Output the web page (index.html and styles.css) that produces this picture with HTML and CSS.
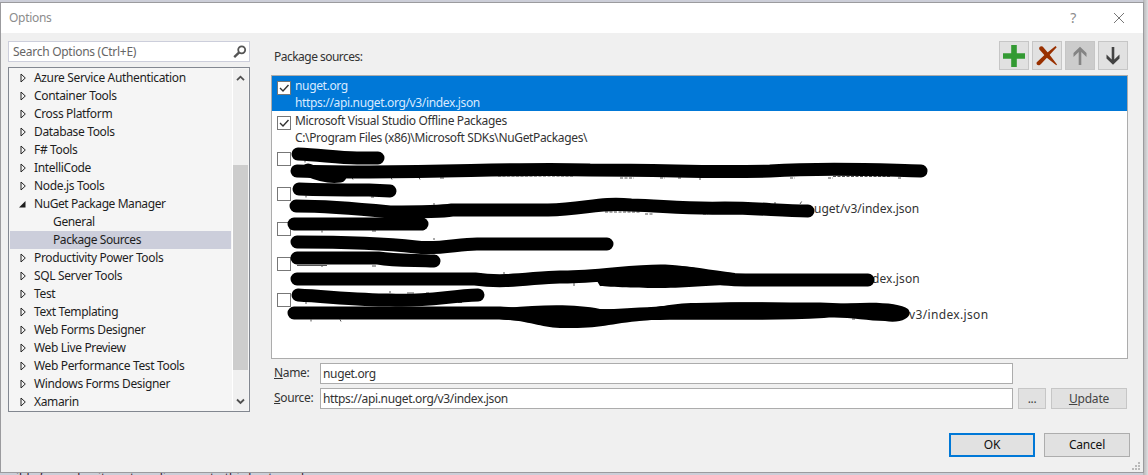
FILE: index.html
```html
<!DOCTYPE html>
<html lang="en">
<head>
<meta charset="utf-8">
<title>Options</title>
<link rel="stylesheet" href="styles.css">
</head>
<body>
<svg width="0" height="0" class="defs">
  <defs>
    <symbol id="closed" viewBox="0 0 7 10"><path d="M1 1v8l4.300-4z" fill="none" stroke="#222"/></symbol>
    <symbol id="opened" viewBox="0 0 7 7"><path d="M6.500 0v6.500H0z" fill="#1e1e1e"/></symbol>
  </defs>
</svg>
<div class="behind">ible for and write out media move to this best way loop</div>
<div class="dialog">
  <header class="titlebar">
    <span class="title">Options</span>
    <span class="help">?</span>
    <svg class="close" width="12" height="12" viewBox="0 0 12 12"><path d="M1 1l10 10M11 1L1 11" stroke="#777" fill="none"/></svg>
  </header>
  <main class="content">
    <aside class="nav">
      <div class="search"><span>Search Options (Ctrl+E)</span>
        <svg width="14" height="14" viewBox="0 0 14 14"><circle cx="8.700" cy="4.800" r="3.500" fill="none" stroke="#555" stroke-width="1.800"/><path d="M6.200 7.300L1.200 12.200" stroke="#555" stroke-width="2.400"/></svg>
      </div>
      <div class="tree">
        <ul class="items">
          <li><svg><use href="#closed"/></svg><span>Azure Service Authentication</span></li>
          <li><svg><use href="#closed"/></svg><span>Container Tools</span></li>
          <li><svg><use href="#closed"/></svg><span>Cross Platform</span></li>
          <li><svg><use href="#closed"/></svg><span>Database Tools</span></li>
          <li><svg><use href="#closed"/></svg><span>F# Tools</span></li>
          <li><svg><use href="#closed"/></svg><span>IntelliCode</span></li>
          <li><svg><use href="#closed"/></svg><span>Node.js Tools</span></li>
          <li class="open"><svg><use href="#opened"/></svg><span>NuGet Package Manager</span></li>
          <li class="child"><span>General</span></li>
          <li class="child selected"><span>Package Sources</span></li>
          <li><svg><use href="#closed"/></svg><span>Productivity Power Tools</span></li>
          <li><svg><use href="#closed"/></svg><span>SQL Server Tools</span></li>
          <li><svg><use href="#closed"/></svg><span>Test</span></li>
          <li><svg><use href="#closed"/></svg><span>Text Templating</span></li>
          <li><svg><use href="#closed"/></svg><span>Web Forms Designer</span></li>
          <li><svg><use href="#closed"/></svg><span>Web Live Preview</span></li>
          <li><svg><use href="#closed"/></svg><span>Web Performance Test Tools</span></li>
          <li><svg><use href="#closed"/></svg><span>Windows Forms Designer</span></li>
          <li><svg><use href="#closed"/></svg><span>Xamarin</span></li>
        </ul>
        <div class="scrollbar">
          <svg width="9" height="7" viewBox="0 0 9 7"><path d="M1 5.200l3.500-3.500L8 5.200" fill="none" stroke="#505050" stroke-width="1.800"/></svg>
          <div class="thumb"></div>
          <svg class="down" width="9" height="7" viewBox="0 0 9 7"><path d="M1 1.500L4.500 5 8 1.500" fill="none" stroke="#505050" stroke-width="1.800"/></svg>
        </div>
      </div>
    </aside>
    <section class="panel">
      <div class="toolbar">
        <span class="heading">Package sources:</span>
        <button class="tool"><svg width="22" height="22" viewBox="0 0 22 22"><path d="M8.200 0h5.600v8.200H22v5.600h-8.200V22H8.200v-8.200H0V8.200h8.200z" fill="#339a33"/></svg></button>
        <button class="tool"><svg width="22" height="22" viewBox="0 0 22 22"><path d="M3.200 4.200C2.500 1.500 6 .300 7.500 2.500L13 9l8 10.500-.700.700L10.500 12.500z" fill="#993000"/><path d="M19.500 1l1.200 1.200L13.500 10 5 19c-2 2.500-5.500 1-4.200-1.800L9 9.500z" fill="#993000"/></svg></button>
        <button class="tool disabled"><svg width="22" height="22" viewBox="0 0 22 22"><path d="M9.700 20V7L4.500 12V8L11 1.800 17.500 8v4l-5.200-5v13z" fill="#848484"/></svg></button>
        <button class="tool"><svg width="22" height="22" viewBox="0 0 22 22"><path d="M9.700 2v12.500L4.500 9.500v4L11 19.700l6.500-6.200v-4l-5.200 5V2z" fill="#424242"/></svg></button>
      </div>
      <div class="sources">
        <div class="source active"><i class="box"><svg viewBox="0 0 12 12"><path d="M2 6l3 3 5.500-6" fill="none" stroke="#333" stroke-width="1.400"/></svg></i><div><p>nuget.org</p><p>https://api.nuget.org/v3/index.json</p></div></div>
        <div class="source"><i class="box"><svg viewBox="0 0 12 12"><path d="M2 6l3 3 5.500-6" fill="none" stroke="#333" stroke-width="1.400"/></svg></i><div><p>Microsoft Visual Studio Offline Packages</p><p>C:\Program Files (x86)\Microsoft SDKs\NuGetPackages\</p></div></div>
        <div class="source"><i class="box"></i></div>
        <div class="source"><i class="box"></i><p class="tail t1">uget/v3/index.json</p></div>
        <div class="source"><i class="box"></i></div>
        <div class="source"><i class="box"></i><p class="tail t2">dex.json</p></div>
        <div class="source"><i class="box"></i><p class="tail t3">v3/index.json</p></div>
        <svg class="marks" width="857" height="284" viewBox="271 75 857 284">
          <g class="remnants">
            <path d="M305 160.500v2M352 177.500l1 2M391 177.500l1 2M419 177.500l1 2M440 178h4M306 195.500v2M371 197h3M434 205v-2M322 230.500v2M372 231h4M423 230.500l2-2M434 240v-2M297 265.500h30M322 267v-2M372 266h4M481 275v-2M504 274v-2M306 302v2M390 293v-2M407 293h7M426 293h3M458 302.500h4M311 319.500v2M340 319.500l1 2M574 283v3"/>
            <path d="M498 176h76M620 178h14M660 178h5M678 178h4M700 178v2M790 178h5M828 178h5M833 176.500h57M898 178h3M605 212h35M645 214h9M703 214h5M775 204v-2M800 204l2-3M852 319h4" stroke-dasharray="3 1.500"/>
          </g>
          <g class="strokes">
            <path d="M298 154C321 155 338 158 357 158H378"/>
            <path d="M297 171C430 175 500 167 590 170C680 170 700 173 770 171C830 167 880 170 921 171"/>
            <path d="M308 170Q326 178 340 176"/>
            <path d="M299 189C324 190 345 190 369 190L390 191"/>
            <path d="M296 206C330 206 360 209 390 212C424 212 440 212 452 210H548C586 209 600 202 631 205C665 206 685 209 725 208C760 208 780 211 808 211"/>
            <path d="M294 224H422"/>
            <path d="M297 242C345 242 390 244 416 247C440 250 461 243 480 244H607"/>
            <path d="M297 258H378C395 261 415 260 434 261"/>
            <path d="M297 279H475C510 284 540 276 563 277C600 277 635 270 665 271C695 272 710 281 750 280H868"/>
            <path d="M298 295C333 297 360 300 390 300C425 302 448 296 478 295"/>
            <path d="M294 313H500C540 315 590 318 640 314C680 312 690 309 740 309H820L894 312"/>
          </g>
          <path d="M597 281C612 275 635 266 665 266C690 265 706 270 735 273V285C705 285 690 288 660 288C640 288 610 287 600 286ZM495 309C530 305 574 303 600 309C650 312 665 303 696 303C750 301 800 303 830 305C867 301 899 302 908 309C914 316 903 324 885 321C866 321 844 316 824 318C770 321 700 319 650 320C610 323 602 329 564 328C539 328 530 320 495 319Z"/>
        </svg>
      </div>
      <div class="form">
        <label><u>N</u>ame:</label><div class="input">nuget.org</div>
        <label><u>S</u>ource:</label><div class="input">https://api.nuget.org/v3/index.json</div>
        <button class="small">...</button><button class="small update"><u>U</u>pdate</button>
      </div>
    </section>
  </main>
  <footer class="actions"><button class="ok">OK</button><button>Cancel</button></footer>
  <svg class="grip" width="8" height="8" viewBox="0 0 8 8"><path d="M6 0h2v2H6zM3 3h2v2H3zM6 3h2v2H6zM0 6h2v2H0zM3 6h2v2H3zM6 6h2v2H6z" fill="#b9b9b9"/></svg>
</div>
</body>
</html>
```
FILE: styles.css
```css
* { box-sizing: border-box; }
body {
  margin: 0;
  width: 1148px;
  height: 475px;
  overflow: hidden;
  position: relative;
  padding-top: 2px;
  background: linear-gradient(90deg, #ccced8 0 1143px, #b4b4b6 1143px, #dedee0 1148px);
  font: 12px/18px "Noto Sans", sans-serif;
  letter-spacing: -0.35px;
  color: #1e1e1e;
}
.defs { position: absolute; }
.behind { position: absolute; left: 16px; top: 469px; width: 600px; height: 18px; color: #37152c; white-space: nowrap; letter-spacing: 0; }
.dialog { position: relative; width: 1144px; height: 471px; background: #f0f0f0; border: 1px solid #9b9b9e; }
.titlebar { height: 30px; background: #fff; display: flex; align-items: center; color: #8c8c8c; padding: 0 18px 0 8px; }
.title { flex: 1; letter-spacing: -0.3px; }
.help { font-size: 14px; margin-right: 37px; }
.content { display: flex; padding: 8px 15px 0 7px; }
.nav { width: 242px; }
.search { height: 21px; border: 1px solid #cccedb; background: #fff; display: flex; align-items: center; justify-content: space-between; padding: 0 2px 0 4px; color: #666; letter-spacing: -0.28px; }
.tree { margin-top: 5px; height: 345px; border: 1px solid #828790; background: #f5f5f5; display: flex; justify-content: space-between; padding: 1px; }
.items { margin: 0; padding: 0; list-style: none; width: 221px; }
.items li { height: 18px; display: flex; align-items: center; padding-left: 10px; white-space: nowrap; }
.items svg { width: 7px; height: 10px; margin-right: 7px; }
.items .open svg { width: 7px; height: 7px; margin: 0 8px 0 -1px; }
.items .open { letter-spacing: -0.43px; }
.items .child { padding-left: 43px; }
.items .selected { background: #cccedb; letter-spacing: -0.43px; }
.scrollbar { width: 16px; display: flex; flex-direction: column; align-items: center; padding-top: 6px; background: #f0f0f0; border-left: 1px solid #fff; }
.thumb { width: 15px; height: 205px; background: #cdcdcd; margin-top: 83px; }
.down { margin-top: 28px; }
.panel { width: 857px; margin-left: 21px; color: #333; }
.toolbar { display: flex; height: 34px; gap: 3px; }
.heading { flex: 1; padding: 7px 3px; letter-spacing: -0.5px; letter-spacing: -0.52px; }
button { font: inherit; letter-spacing: inherit; color: inherit; padding: 0; border: 1px solid #adadad; background: #e1e1e1; }
.tool { width: 30px; height: 29px; display: flex; align-items: center; justify-content: center; border-color: #c6c6c6; }
.disabled { background: #ccc; }
.sources { position: relative; height: 284px; border: 1px solid #acacac; background: #fff; }
.source { height: 35.25px; display: flex; padding: 1px 5px; gap: 4px; line-height: 17px; }
.source p { margin: 0; white-space: nowrap; }
.active { background: #0078d7; color: #d8eaff; }
.box { display: block; width: 14px; height: 14px; border: 1px solid #777; background: #fff; margin-top: 4px; flex: none; }
.box svg { display: block; }
.source .tail { margin-top: 17px; letter-spacing: 0; }
.source .t1 { margin-left: 519px; }
.source .t2 { margin-left: 577px; letter-spacing: 0.1px; }
.source .t3 { margin-left: 614px; letter-spacing: 0.35px; }
.marks { position: absolute; left: -1px; top: -1px; }
.strokes { fill: none; stroke: #000; stroke-width: 13; stroke-linecap: round; stroke-linejoin: round; }
.remnants { fill: none; stroke: #555; }
.form { display: grid; grid-template-columns: 49px 693px 28px 76px; grid-auto-rows: 21px; row-gap: 4px; margin-top: 4px; }
.form label { padding: 1px 0 0 3px; }
.input { border: 1px solid #acacac; background: #fff; padding: 1px 2px; }
.form > .input:nth-child(2) { grid-column: 2 / 5; width: 693px; }
.form .small { margin-left: 5px; width: 28px; border-color: #c6c6c6; color: #444; }
.form .update { margin-left: 10px; width: 76px; letter-spacing: -0.2px; }
.actions { display: flex; justify-content: flex-end; gap: 9px; padding: 21px 13px 0 0; color: #111; letter-spacing: -0.2px; }
.actions button { width: 86px; height: 24px; }
.actions .ok { border: 2px solid #0078d7; }
.grip { position: absolute; right: 3px; bottom: 2px; }
```
